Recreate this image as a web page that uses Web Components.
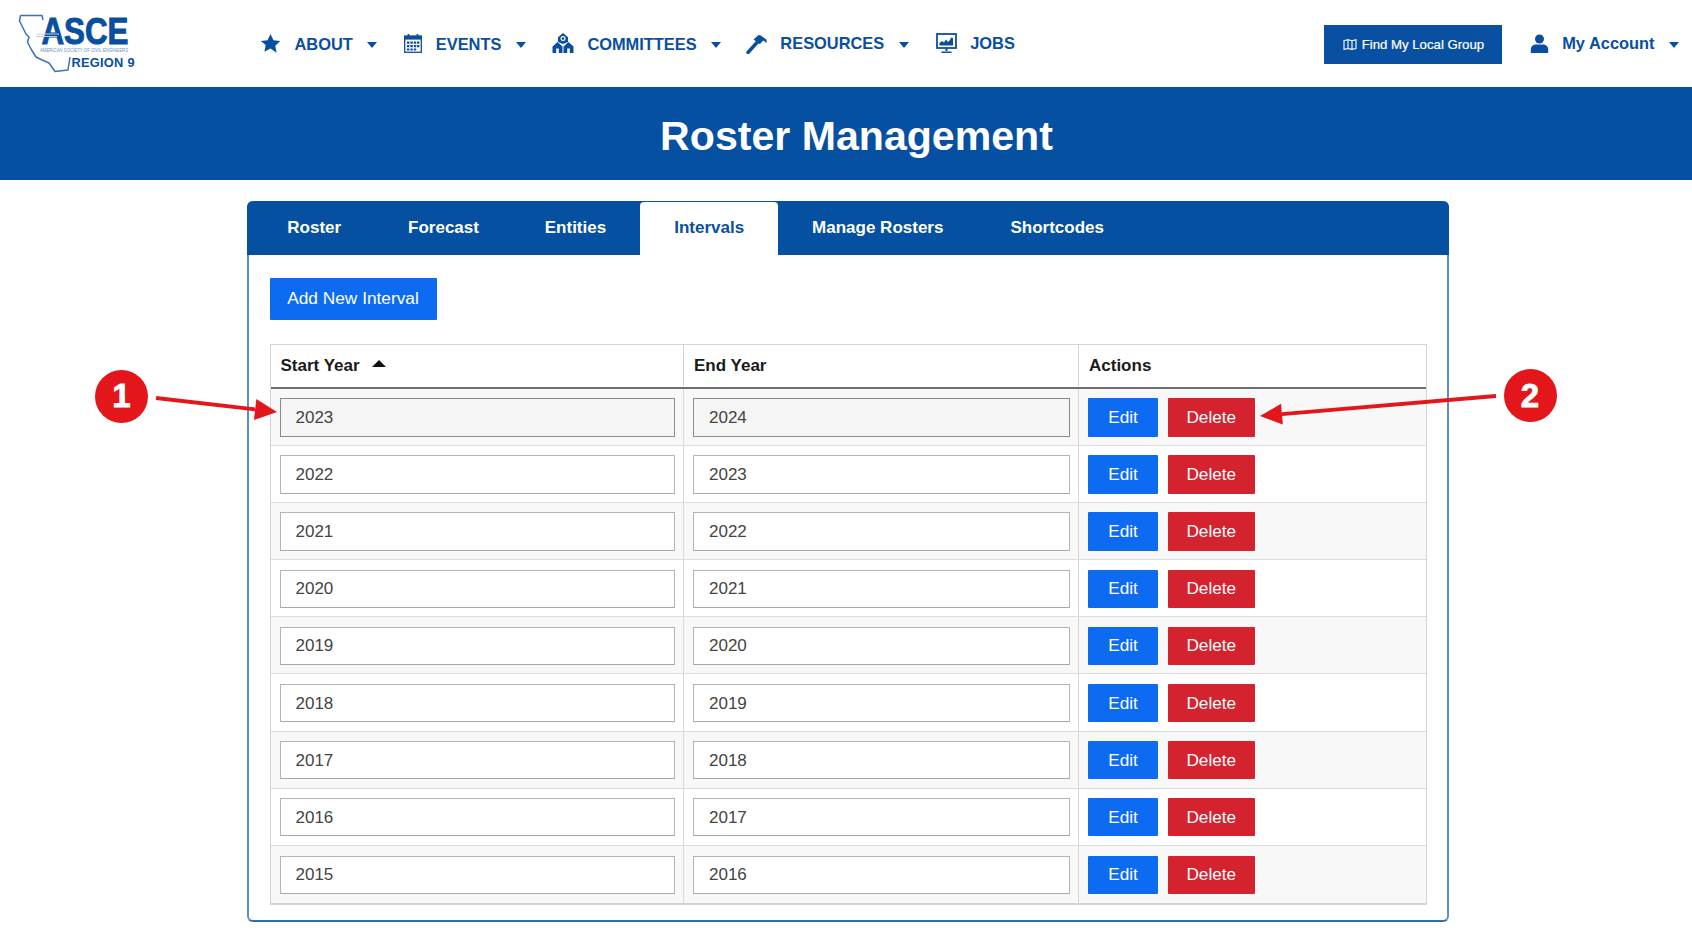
<!DOCTYPE html>
<html lang="en">
<head>
<meta charset="utf-8">
<title>Roster Management</title>
<style>
  html, body { margin: 0; padding: 0; background: #fff; font-family: "Liberation Sans", Arial, sans-serif; }
  body { position: relative; min-height: 930px; overflow: hidden; }
</style>
</head>
<body>

<site-nav>
  <nav-item label="ABOUT" caret low>
    <svg slot="icon" width="21" height="21" viewBox="0 0 24 24" fill="#0a4f9f"><path d="M12 1l3.4 7.2 7.8 1-5.700 5.400 1.500 7.900L12 17.800l-7 3.700 1.500-7.900L.8 9.200l7.800-1z"/></svg>
  </nav-item>
  <nav-item label="EVENTS" caret low>
    <svg slot="icon" width="18" height="20" viewBox="0 0 18 20"><rect x=".7" y="3" width="16.600" height="16.300" fill="none" stroke="#0a4f9f" stroke-width="1.300"/><rect x=".7" y="3" width="16.600" height="3.600" fill="#0a4f9f"/><path d="M4.500 1v3.500M13.500 1v3.500" stroke="#0a4f9f" stroke-width="1.800"/><path d="M3 8.500h2.400v2.200H3zM6.400 8.500h2.400v2.200H6.400zM9.800 8.500h2.400v2.200H9.800zM13 8.500h2.400v2.200H13zM3 12h2.400v2.200H3zM6.400 12h2.400v2.200H6.400zM9.800 12h2.400v2.200H9.800zM13 12h2.400v2.200H13zM3 15.400h2.400v2.200H3zM6.400 15.400h2.400v2.200H6.400zM9.800 15.400h2.400v2.200H9.800z" fill="#0a4f9f"/></svg>
  </nav-item>
  <nav-item label="COMMITTEES" caret low style="margin-left:-1px">
    <svg slot="icon" width="22" height="20" viewBox="0 0 22 20"><path d="M11 0l5 4.200V9l-5 2-5-2V4.200z" fill="#0a4f9f"/><circle cx="11" cy="5.600" r="2.500" fill="#fff"/><circle cx="11" cy="5.600" r="1.300" fill="#0a4f9f"/><path d="M.5 20v-6.500L5.500 9l5 4.500V20zM11.500 20v-6.500l5-4.500 5 4.500V20z" fill="#0a4f9f"/><path d="M4.200 20v-4.500h2.600V20zM15.200 20v-4.500h2.600V20z" fill="#fff"/></svg>
  </nav-item>
  <nav-item label="RESOURCES" caret style="margin-left:-2.300px">
    <svg slot="icon" width="21" height="21" viewBox="0 0 21 21"><path d="M2 19.500L11 9.500" stroke="#0a4f9f" stroke-width="3.400" stroke-linecap="round"/><path d="M7.500 6.500L12.500 2l2.500.6 5.500 4.200.5 3.200-3.800-2.500-3.400 3.700z" fill="#0a4f9f"/></svg>
  </nav-item>
  <nav-item label="JOBS">
    <svg slot="icon" width="21" height="21" viewBox="0 0 21 21"><rect x="1" y="1" width="19" height="14" fill="none" stroke="#0a4f9f" stroke-width="1.800"/><path d="M3.500 12.500V10l2.500-2 2 1.500L10 6.500l2 2.500 2-2 1-2.500 2 .5v7.500z" fill="#0a4f9f"/><path d="M9.500 15.500h2v2.500h-2zM5.500 18.500h10V20h-10z" fill="#0a4f9f"/></svg>
  </nav-item>
</site-nav>

<page-banner>Roster Management</page-banner>

<roster-card>
  <tab-item slot="tabs" style="margin:0 -1.100px 0 4.300px">Roster</tab-item>
  <tab-item slot="tabs" style="margin-right:-2.200px">Forecast</tab-item>
  <tab-item slot="tabs">Entities</tab-item>
  <tab-item slot="tabs" active>Intervals</tab-item>
  <tab-item slot="tabs" style="margin-right:-1px">Manage Rosters</tab-item>
  <tab-item slot="tabs">Shortcodes</tab-item>

  <action-button kind="primary" class="add">Add New Interval</action-button>

  <interval-table>
    <interval-row start="2023" end="2024" shaded focused></interval-row>
    <interval-row start="2022" end="2023"></interval-row>
    <interval-row start="2021" end="2022" shaded></interval-row>
    <interval-row start="2020" end="2021"></interval-row>
    <interval-row start="2019" end="2020" shaded></interval-row>
    <interval-row start="2018" end="2019"></interval-row>
    <interval-row start="2017" end="2018" shaded></interval-row>
    <interval-row start="2016" end="2017"></interval-row>
    <interval-row start="2015" end="2016" shaded></interval-row>
  </interval-table>
</roster-card>

<call-out num="1" x="121.500" y="396" x1="156" y1="398" x2="277" y2="412"></call-out>
<call-out num="2" x="1530" y="395.500" x1="1496" y1="396" x2="1260" y2="416"></call-out>

<script>
class SiteNav extends HTMLElement {
  constructor() {
    super();
    this.attachShadow({mode: 'open'}).innerHTML = `
      <style>
        :host { display: flex; align-items: center; height: 86.500px; box-sizing: border-box; padding-right: 13px; background: #fff; font-family: "Liberation Sans", Arial, sans-serif; }
        .logo { flex: none; width: 260px; height: 86px; display: block; }
        .items { display: flex; align-items: center; gap: 27px; }
        .right { margin-left: auto; display: flex; align-items: center; }
        .find { display: flex; align-items: center; gap: 5px; box-sizing: border-box; width: 178px; height: 39px; margin-top: 1.500px; padding-left: 19px; margin-right: 28px; background: #0a50a2; color: #fff; font-size: 13.200px; -webkit-text-stroke: .2px #fff; }
      </style>
      <svg class="logo" viewBox="0 0 260 86">
        <path d="M20.500 15.500 L42 15.500 L43 20 M20.500 15.500 L19.500 21 L23 28 L26 34 L29 37 L27.500 42 L31 49 L36 57 L41 59.500 L49 63 L55 71.500 L68 70 L70 57" fill="none" stroke="#3a72b8" stroke-width="1.500" stroke-linejoin="round"/>
        <text x="41.500" y="44" font-family="Liberation Sans" font-weight="700" font-size="37" textLength="87" lengthAdjust="spacingAndGlyphs" fill="#0a4f9f" stroke="#0a4f9f" stroke-width="1">ASCE</text>
        <path d="M37 34h22M36 36.500h21" stroke="#c4d0e2" stroke-width="1"/>
        <text x="40" y="51.500" font-family="Liberation Sans" font-size="5.300" textLength="88" lengthAdjust="spacingAndGlyphs" fill="#6d8fbe">AMERICAN SOCIETY OF CIVIL ENGINEERS</text>
        <text x="71.500" y="66.500" font-family="Liberation Sans" font-weight="700" font-size="12.800" textLength="63" fill="#0a4f9f">REGION 9</text>
      </svg>
      <div class="items"><slot></slot></div>
      <div class="right">
        <div class="find">
          <svg width="14" height="11" viewBox="0 0 14 11" fill="none" stroke="#fff" stroke-width="1.100"><path d="M1 1.500L5 .8v8.700l-4 .8zM5 .8l4 .9v8.600l-4-.8zM9 1.700l4-.9v8.700l-4 .8z"/></svg>
          <span>Find My Local Group</span>
        </div>
        <nav-item label="My Account" caret>
          <svg slot="icon" width="19" height="19" viewBox="0 0 19 19" fill="#0a4f9f"><circle cx="9.500" cy="5" r="4.500"/><path d="M.8 19v-3.500C.8 12 3.500 10.500 6 10.500h7c2.500 0 5.200 1.500 5.200 5V19z"/></svg>
        </nav-item>
      </div>
    `;
  }
}
customElements.define('site-nav', SiteNav);

class NavItem extends HTMLElement {
  constructor() {
    super();
    const caret = this.hasAttribute('caret') ? '<i class="caret"></i>' : '';
    this.attachShadow({mode: 'open'}).innerHTML = `
      <style>
        :host { display: flex; align-items: center; color: #0a4f9f; font-size: 16.400px; font-weight: 700; white-space: nowrap; }
        :host([low]) .txt { padding-top: 1.500px; }
        .txt { margin-left: 13.500px; }
        .caret { width: 0; height: 0; margin-left: 14.500px; margin-top: 3px; border-left: 5.500px solid transparent; border-right: 5.500px solid transparent; border-top: 6px solid #0a4f9f; }
      </style>
      <slot name="icon"></slot><span class="txt">${this.getAttribute('label')}</span>${caret}
    `;
  }
}
customElements.define('nav-item', NavItem);

class PageBanner extends HTMLElement {
  constructor() {
    super();
    this.attachShadow({mode: 'open'}).innerHTML = `
      <style>
        :host { display: flex; justify-content: center; align-items: center; box-sizing: border-box; height: 93.500px; padding: 6px 0 0 21px; background: #0550a0; color: #fff; font-size: 41.100px; font-weight: 700; }
      </style>
      <slot></slot>
    `;
  }
}
customElements.define('page-banner', PageBanner);

class RosterCard extends HTMLElement {
  constructor() {
    super();
    this.attachShadow({mode: 'open'}).innerHTML = `
      <style>
        :host { display: block; box-sizing: border-box; width: 1202px; height: 721.500px; margin: 20.500px 0 0 247px; border: 2px solid #5a90cd; border-top: 0; border-bottom-color: #2f6db5; border-radius: 6px; background: #fff; }
        .tabs { display: flex; height: 54.500px; margin: 0 -2px; padding-left: 2px; background: #0550a0; border-radius: 6px 6px 0 0; }
        .body { padding: 23px 20px 0 20.500px; }
        ::slotted(.add) { width: 167px; height: 41.500px; margin-bottom: 24.500px; font-size: 17.300px; }
      </style>
      <div class="tabs"><slot name="tabs"></slot></div>
      <div class="body"><slot></slot></div>
    `;
  }
}
customElements.define('roster-card', RosterCard);

class TabItem extends HTMLElement {
  constructor() {
    super();
    this.attachShadow({mode: 'open'}).innerHTML = `
      <style>
        :host { display: flex; align-items: center; padding: 0 34px; color: #fff; font-size: 17px; font-weight: 700; white-space: nowrap; }
        :host([active]) { margin-top: 1px; background: #fff; color: #0a4f9f; border-radius: 4px 4px 0 0; }
      </style>
      <slot></slot>
    `;
  }
}
customElements.define('tab-item', TabItem);

class ActionButton extends HTMLElement {
  constructor() {
    super();
    this.attachShadow({mode: 'open'}).innerHTML = `
      <style>
        :host { display: flex; justify-content: center; align-items: center; box-sizing: border-box; height: 38.500px; color: #fff; font-size: 17.200px; border-radius: 1px; white-space: nowrap; }
        :host([kind="primary"]) { background: #0d6bf2; }
        :host([kind="danger"]) { background: #d5222f; }
      </style>
      <slot></slot>
    `;
  }
}
customElements.define('action-button', ActionButton);

class IntervalTable extends HTMLElement {
  constructor() {
    super();
    this.attachShadow({mode: 'open'}).innerHTML = `
      <style>
        :host { display: block; box-sizing: border-box; width: 1157.500px; --cols: 412.500px 395px 1fr; border: 1px solid #d4d4d4; border-bottom-width: 2px; }
        .head { display: grid; grid-template-columns: var(--cols); box-sizing: border-box; height: 44px; padding-bottom: 1px; border-bottom: 2px solid #6f6f6f; background: #fff; color: #1a1a1a; font-size: 17px; font-weight: 700; }
        .head div { display: flex; align-items: center; padding-left: 10px; }
        .head div + div { border-left: 1px solid #d4d4d4; }
        .sort { width: 0; height: 0; margin: 0 0 5px 12px; border-left: 7px solid transparent; border-right: 7px solid transparent; border-bottom: 7px solid #111; }
      </style>
      <div class="head">
        <div>Start Year<i class="sort"></i></div>
        <div>End Year</div>
        <div>Actions</div>
      </div>
      <slot></slot>
    `;
  }
}
customElements.define('interval-table', IntervalTable);

class IntervalRow extends HTMLElement {
  constructor() {
    super();
    this.attachShadow({mode: 'open'}).innerHTML = `
      <style>
        :host { display: grid; grid-template-columns: var(--cols); box-sizing: border-box; height: 57.100px; border-bottom: 1px solid #dcdcdc; background: #fff; }
        :host([shaded]) { background: #f8f8f8; }
        :host(:last-child) { border-bottom: 0; }
        .cell { display: flex; align-items: center; box-sizing: border-box; padding: 1px 8px 0 9px; }
        .cell + .cell { border-left: 1px solid #d8d8d8; }
        .field { flex: 1; box-sizing: border-box; height: 38.500px; display: flex; align-items: center; padding: 1px 0 0 15px; border: 1px solid #b4b4b4; border-bottom-color: #a8a8a8; background: #fff; color: #444; font-size: 17px; }
        :host([focused]) .field { background: #f5f5f5; border-color: #8b8b8b; }
        .edit { width: 70px; margin-right: 9.500px; }
        .del { width: 87.500px; }
      </style>
      <div class="cell"><div class="field">${this.getAttribute('start')}</div></div>
      <div class="cell"><div class="field">${this.getAttribute('end')}</div></div>
      <div class="cell">
        <action-button kind="primary" class="edit">Edit</action-button>
        <action-button kind="danger" class="del">Delete</action-button>
      </div>
    `;
  }
}
customElements.define('interval-row', IntervalRow);

// numbered red marker with its arrow, laid over the page
class CallOut extends HTMLElement {
  constructor() {
    super();
    const n = k => parseFloat(this.getAttribute(k));
    const x1 = n('x1'), y1 = n('y1'), x2 = n('x2'), y2 = n('y2');
    const len = Math.hypot(x2 - x1, y2 - y1);
    const ux = (x2 - x1) / len, uy = (y2 - y1) / len;
    const bx = x2 - ux * 22, by = y2 - uy * 22;
    const hx = -uy * 10.500, hy = ux * 10.500;
    this.attachShadow({mode: 'open'}).innerHTML = `
      <style>
        :host { position: absolute; left: 0; top: 0; width: 0; height: 0; display: block; }
        svg { position: absolute; left: 0; top: 0; overflow: visible; }
        .badge { position: absolute; left: ${n('x') - 26.5}px; top: ${n('y') - 26.5}px; width: 53px; height: 53px; border-radius: 50%; background: #e3171b; color: #fff; display: flex; align-items: center; justify-content: center; font-size: 33px; font-weight: 700; -webkit-text-stroke: .8px #fff; }
      </style>
      <svg width="1" height="1">
        <line x1="${x1}" y1="${y1}" x2="${bx}" y2="${by}" stroke="#e3171b" stroke-width="3.800"/>
        <polygon points="${x2},${y2} ${bx + hx},${by + hy} ${bx - hx},${by - hy}" fill="#e3171b"/>
      </svg>
      <div class="badge">${this.getAttribute('num')}</div>
    `;
  }
}
customElements.define('call-out', CallOut);
</script>
</body>
</html>
